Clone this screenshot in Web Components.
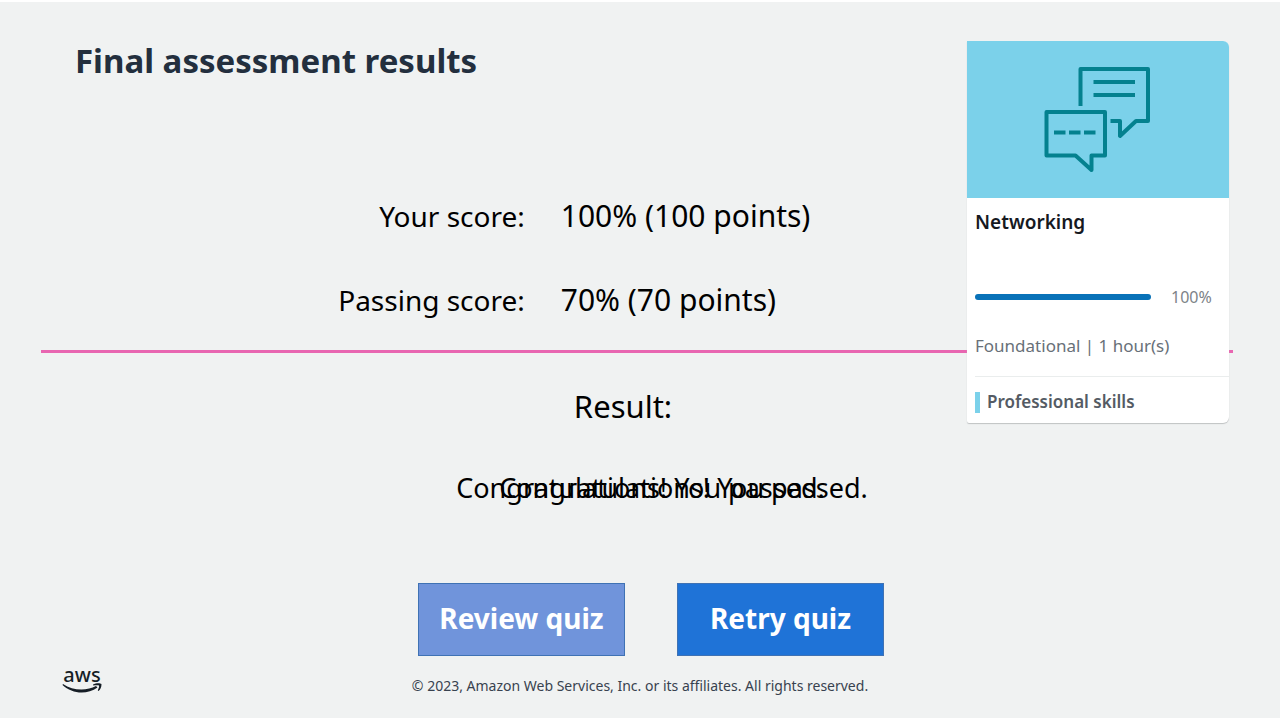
<!DOCTYPE html>
<html lang="en">
<head>
<meta charset="utf-8">
<title>Final assessment results</title>
<style>
body { margin: 0; font-family: "Noto Sans", "Open Sans", sans-serif; color: #000; }
</style>
</head>
<body>
<assessment-slide>
  <span slot="title">Final assessment results</span>
  <score-list></score-list>
  <quiz-result></quiz-result>
  <course-card slot="card" level="Foundational | 1 hour(s)" category="Professional skills" progress="100">Networking</course-card>
  <slide-footer slot="footer">© 2023, Amazon Web Services, Inc. or its affiliates. All rights reserved.</slide-footer>
</assessment-slide>
<script>
function define(name, render) {
  customElements.define(name, class extends HTMLElement {
    constructor() {
      super();
      this.attachShadow({ mode: 'open' }).innerHTML = render(this);
    }
  });
}

define('assessment-slide', () => `
<style>
  :host { display: flex; flex-direction: column; position: relative; box-sizing: border-box; min-height: 100vh;
    background: #f0f2f2; border-top: 2px solid #fff; border-bottom: 2px solid #fff; }
  h1 { margin: 0; padding: 37px 75px 0; font-size: 33px; line-height: 44px; font-weight: 700; color: #232f3e; }
  main { flex: 1; }
  .card { position: absolute; top: 39px; right: 51px; }
</style>
<h1><slot name="title"></slot></h1>
<main><slot></slot></main>
<div class="card"><slot name="card"></slot></div>
<slot name="footer"></slot>`);

define('score-list', () => `
<style>
  :host { display: block; padding-top: 111px; }
  dl { display: grid; grid-template-columns: 41% 1fr; column-gap: 36px; row-gap: 40px; margin: 0; font-size: 28px; line-height: 44px; }
  dt { text-align: right; }
  dd { margin: 0; font-size: 30px; }
  hr { margin: 28px 47px 0 41px; border: 0; height: 3px; background: #e866b1; }
</style>
<dl>
  <dt>Your score:</dt><dd>100% (100 points)</dd>
  <dt>Passing score:</dt><dd>70% (70 points)</dd>
</dl>
<hr>`);

define('quiz-result', () => `
<style>
  :host { display: flex; flex-direction: column; align-items: center; }
  h2 { margin: 31px 34px 0 0; font-size: 31px; line-height: 44px; font-weight: 400; }
  .messages { display: grid; margin: 38px 0 0 44px; font-size: 27px; line-height: 44px; }
  .messages p { grid-area: 1 / 1; margin: 0; }
  .messages p:first-child { padding-right: 43px; }
  .messages p:last-child { padding-left: 43px; }
  .actions { display: flex; gap: 52px; margin: 73px 0 0 22px; }
</style>
<h2>Result:</h2>
<div class="messages"><p>Congratulations! You passed.</p><p>Congratulations! You passed.</p></div>
<div class="actions">
  <quiz-button style="--fill: #7094db">Review quiz</quiz-button>
  <quiz-button>Retry quiz</quiz-button>
</div>`);

define('quiz-button', () => `
<style>
  :host { display: block; }
  button { display: block; width: 207px; height: 73px; padding: 0 0 3px; border: 1px solid #3f72b4; background: var(--fill, #1f73d7);
    color: #fff; font: 700 28px/40px "Noto Sans", "Open Sans", sans-serif; white-space: nowrap; }
</style>
<button type="button"><slot></slot></button>`);

define('course-card', el => `
<style>
  :host { display: block; width: 262px; background: #fff; border-radius: 0 6px 6px 2px; overflow: hidden;
    box-shadow: 0 1px 1px #bfc2c3; color: #687078; }
  .art { height: 157px; background: #7bd1ea; }
  .art svg { display: block; width: 262px; height: 157px; margin: auto; }
  .body { padding-left: 8px; }
  h3 { margin: 0; padding-top: 10px; font-size: 19px; line-height: 28px; font-weight: 600; color: #16191f; }
  .progress { display: flex; align-items: center; gap: 20px; margin-top: 51px; font-size: 16px; line-height: 20px; color: #7d8388; }
  progress { appearance: none; width: 176px; height: 6px; border: 0; border-radius: 3px; overflow: hidden; background: #dde; }
  progress::-webkit-progress-bar { background: #dde; }
  progress::-webkit-progress-value { background: #0972b8; }
  p { margin: 25px 0 0; font-size: 17px; line-height: 28px; }
  .category { display: flex; align-items: center; gap: 7px; margin-top: 16px; padding: 11px 0 7px; border-top: 1px solid #eaeded;
    font-size: 17px; line-height: 28px; font-weight: 600; color: #545b64; }
  .category::before { content: ""; width: 5px; height: 21px; background: #7bd1ea; }
</style>
<div class="art">
  <svg viewBox="967 41 262 157" fill="none" stroke="#04818f" stroke-width="4" stroke-linejoin="round" aria-hidden="true">
    <path d="M1080.500 106V69H1148V121H1136L1120 136V121H1110.500"/>
    <path d="M1093.500 82H1135M1093.500 95H1135"/>
    <path d="M1046.500 112H1105V155.500H1091.500V170L1075.500 155.500H1046.500Z"/>
    <path d="M1054 132.500H1065.500M1069 132.500H1080.500M1084 132.500H1095.500"/>
  </svg>
</div>
<div class="body">
  <h3><slot></slot></h3>
  <div class="progress"><progress value="${el.getAttribute('progress')}" max="100" aria-label="Course progress"></progress><span>${el.getAttribute('progress')}%</span></div>
  <p>${el.getAttribute('level')}</p>
  <div class="category">${el.getAttribute('category')}</div>
</div>`);

define('slide-footer', () => `
<style>
  :host { display: grid; grid-template-columns: 1fr auto 1fr; align-items: end; padding: 0 62px 22px; }
  small { font-size: 14px; line-height: 20px; color: #38424f; }
</style>
<aws-logo></aws-logo><small><slot></slot></small>`);

define('aws-logo', () => `
<style>
  :host { display: block; width: 40px; padding-bottom: 2px; color: #161e26; }
  span { display: block; font-size: 20px; line-height: 16px; text-align: center; font-weight: 500; }
  svg { display: block; width: 40px; height: 11px; }
</style>
<span>aws</span>
<svg viewBox="0 0 40 11" fill="currentColor" aria-hidden="true">
  <path d="M1 1C11 8 25 8 34 3L35.500 4.500C25 12 10 11 .5 2Z"/>
  <path d="M31 1.500C34 0 38 0 39.500 1C39.500 4 38.500 6.500 36.500 8L35.800 7.500C36.500 5.500 37.500 3.500 37 2.500C36 2 33 2.300 31.200 2.500Z"/>
</svg>`);
</script>
</body>
</html>
